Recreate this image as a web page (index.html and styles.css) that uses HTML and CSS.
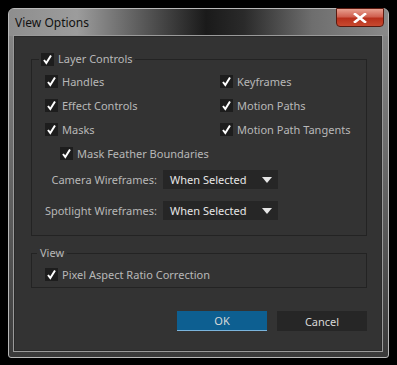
FILE: index.html
```html
<!DOCTYPE html>
<html lang="en">
<head>
<meta charset="UTF-8">
<title>View Options</title>
<link rel="stylesheet" href="styles.css">
</head>
<body>

<div class="window">
    <div class="titlebar">
        <span class="title">View Options</span>
        <button class="close" type="button">
            <svg width="14" height="10" viewBox="0 0 14 10"><path d="M2 1 L12 9 M12 1 L2 9" stroke="#fff" stroke-width="2.6" stroke-linecap="square"/></svg>
        </button>
    </div>

    <div class="content">
        <fieldset class="group layer">
            <legend>
                <label class="check"><span class="box"><svg width="13" height="13" viewBox="0 0 13 13"><path d="M3 7 L5.3 10 L10 2.5" fill="none" stroke="#fff" stroke-width="2"/></svg></span>Layer Controls</label>
            </legend>

            <div class="options">
                <label class="check"><span class="box"><svg width="13" height="13" viewBox="0 0 13 13"><path d="M3 7 L5.3 10 L10 2.5" fill="none" stroke="#fff" stroke-width="2"/></svg></span>Handles</label>
                <label class="check"><span class="box"><svg width="13" height="13" viewBox="0 0 13 13"><path d="M3 7 L5.3 10 L10 2.5" fill="none" stroke="#fff" stroke-width="2"/></svg></span>Keyframes</label>
                <label class="check"><span class="box"><svg width="13" height="13" viewBox="0 0 13 13"><path d="M3 7 L5.3 10 L10 2.5" fill="none" stroke="#fff" stroke-width="2"/></svg></span>Effect Controls</label>
                <label class="check"><span class="box"><svg width="13" height="13" viewBox="0 0 13 13"><path d="M3 7 L5.3 10 L10 2.5" fill="none" stroke="#fff" stroke-width="2"/></svg></span>Motion Paths</label>
                <label class="check"><span class="box"><svg width="13" height="13" viewBox="0 0 13 13"><path d="M3 7 L5.3 10 L10 2.5" fill="none" stroke="#fff" stroke-width="2"/></svg></span>Masks</label>
                <label class="check"><span class="box"><svg width="13" height="13" viewBox="0 0 13 13"><path d="M3 7 L5.3 10 L10 2.5" fill="none" stroke="#fff" stroke-width="2"/></svg></span>Motion Path Tangents</label>
            </div>

            <label class="check sub"><span class="box"><svg width="13" height="13" viewBox="0 0 13 13"><path d="M3 7 L5.3 10 L10 2.5" fill="none" stroke="#fff" stroke-width="2"/></svg></span>Mask Feather Boundaries</label>

            <div class="selects">
                <span class="sel-label">Camera Wireframes:</span>
                <div class="select">When Selected <span class="caret"></span></div>
                <span class="sel-label">Spotlight Wireframes:</span>
                <div class="select">When Selected <span class="caret"></span></div>
            </div>
        </fieldset>

        <fieldset class="group view">
            <legend class="plain">View</legend>
            <label class="check"><span class="box"><svg width="13" height="13" viewBox="0 0 13 13"><path d="M3 7 L5.3 10 L10 2.5" fill="none" stroke="#fff" stroke-width="2"/></svg></span>Pixel Aspect Ratio Correction</label>
        </fieldset>

        <div class="buttons">
            <button class="btn ok" type="button">OK</button>
            <button class="btn" type="button">Cancel</button>
        </div>
    </div>
</div>

</body>
</html>
```

FILE: styles.css
```css
body {
    margin: 0;
    background-color: #000;
    font-family: "Noto Sans", "Open Sans", sans-serif;
    font-size: 11px;
}
.window {
    margin: 8px 0 0 8px;
    width: 368px;
    height: 342px;
    border: 1px solid #b8b8b8;
    border-radius: 6px 6px 3px 3px;
    padding: 0 6px 6px 5px;
    background: linear-gradient(to bottom, #8a8a8a 0, #6c6c6c 40%, #3a3a3a 100%);
    display: flex;
    flex-direction: column;
}
.titlebar {
    height: 27px;
    display: flex;
    justify-content: space-between;
    align-items: flex-start;
    margin: 0 -6px 0 -5px;
    padding: 0 4px 0 6px;
    border-radius: 5px 5px 0 0;
    background: linear-gradient(to right, #8e8e8e 0, #9c9c9c 18%, #5a5a5a 35%, #1a1a1a 52%, #2a2a2a 62%, #6e6e6e 80%, #8a8a8a 100%);
}
.title {
    color: #111;
    font-size: 12px;
    line-height: 14px;
    margin-top: 7px;
}
.close {
    width: 48px;
    height: 19px;
    margin-top: -1px;
    border: 1px solid #5a1a10;
    border-radius: 0 0 4px 4px;
    background: linear-gradient(to bottom, #e8a090 0, #d06050 45%, #b8301c 55%, #c84a30 100%);
    display: flex;
    align-items: center;
    justify-content: center;
    padding: 0;
}
.content {
    flex: 1;
    background-color: #333;
    border: 1px solid #2a2a2a;
    box-shadow: 0 0 0 1px #9a9a9a;
    color: #b8b8b8;
    padding-top: 15px;
}
.group {
    margin: 0 14px 0 16px;
    padding: 0;
    border: 1px solid #232323;
}
.group legend {
    margin-left: 7px;
    padding: 0 2px;
    height: 14px;
    line-height: 14px;
}
.group legend.plain {
    margin-left: 5px;
    padding: 0 3px;
}
.check {
    display: flex;
    align-items: center;
    gap: 4px;
    height: 24px;
    white-space: nowrap;
}
legend .check {
    height: 14px;
}
.box {
    width: 13px;
    height: 13px;
    background-color: #1d1d1d;
    display: block;
}
.box svg {
    display: block;
}
.layer {
    height: 182px;
}
.options {
    display: grid;
    grid-template-columns: 175px auto;
    padding: 3px 0 0 13px;
}
.sub {
    padding-left: 28px;
}
.selects {
    display: grid;
    grid-template-columns: 125px 115px;
    column-gap: 6px;
    row-gap: 12px;
    align-items: center;
    margin-top: 5px;
}
.sel-label {
    text-align: right;
}
.select {
    height: 19px;
    background-color: #262626;
    color: #e6e6e6;
    display: flex;
    align-items: center;
    justify-content: space-between;
    padding: 0 6px 0 7px;
}
.caret {
    width: 0;
    height: 0;
    border-left: 5px solid transparent;
    border-right: 5px solid transparent;
    border-top: 6px solid #e6e6e6;
}
.view {
    margin-top: 10px;
    height: 40px;
}
.view .check {
    padding: 2px 0 0 13px;
}
.buttons {
    display: flex;
    justify-content: flex-end;
    gap: 10px;
    margin: 23px 14px 0 0;
}
.btn {
    width: 90px;
    height: 20px;
    border: none;
    background-color: #262626;
    color: #d8d8d8;
    font-family: "Noto Sans", "Open Sans", sans-serif;
    font-size: 11px;
    padding: 0;
}
.btn.ok {
    background-color: #0d5f91;
    border-bottom: 1px solid #7ab4dc;
}
```
